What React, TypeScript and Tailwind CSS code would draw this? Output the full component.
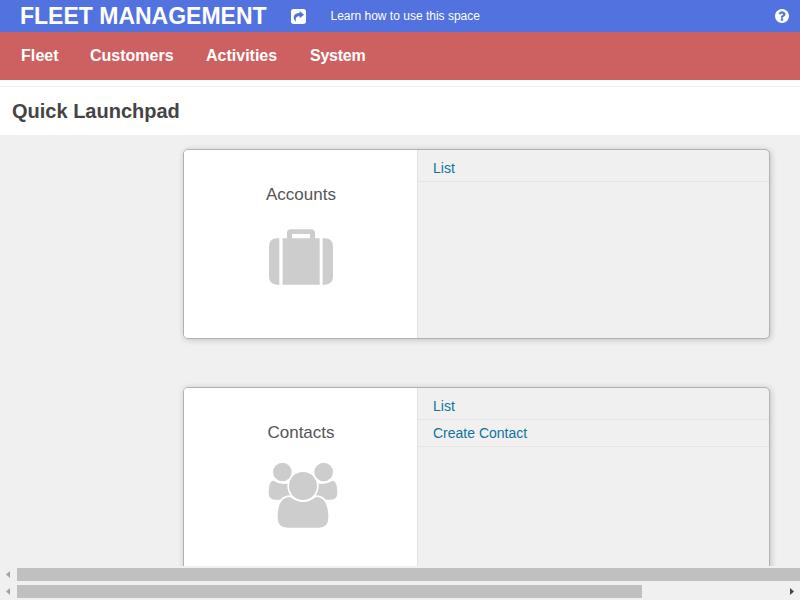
import React from 'react';

const nav = [
  { label: 'Fleet', style: 'w-[69px] tracking-[0.08px]' },
  { label: 'Customers', style: 'w-[116px]' },
  { label: 'Activities', style: 'w-[104px]' },
  { label: 'System', style: 'w-[80px] tracking-[-0.25px]' },
];

function ShareIcon() {
  return (
    <svg className="block h-[15px] w-[15px]" viewBox="0 0 45 45">
      <rect width="45" height="45" rx="8" fill="#fff" />
      <path d="M26 6 L39 17 L26 28 V22 C16 22 13 27 15 38 C5 31 4 12 26 12 Z" fill="#5272df" />
    </svg>
  );
}

function HelpIcon() {
  return (
    <svg className="block h-[14px] w-[14px]" viewBox="0 0 1536 1536">
      <path
        fill="#fff"
        d="M896 1248v-192q0-14-9-23t-23-9H672q-14 0-23 9t-9 23v192q0 14 9 23t23 9h192q14 0 23-9t9-23zm256-672q0-88-55.500-163T958 297t-170-41q-243 0-371 213-15 24 8 42l132 100q7 6 19 6 16 0 25-12 53-68 86-92 34-24 86-24 48 0 85.500 26t37.500 59q0 38-20 61t-68 45q-63 28-115.500 86.500T640 892v36q0 14 9 23t23 9h192q14 0 23-9t9-23q0-19 21.500-49.500T972 829q32-18 49-28.500t46-35 44.500-48 28-60.500 12.500-81zm384 192q0 209-103 385.500T1153.500 1433 768 1536t-385.500-103T103 1153.500 0 768t103-385.500T382.500 103 768 0t385.500 103T1433 382.500 1536 768z"
      />
    </svg>
  );
}

function SuitcaseIcon() {
  return (
    <svg className="h-[56px] w-[64px]" viewBox="0 0 192 168">
      <g fill="#cdcdcd">
        <path d="M31 28 V167 H24 Q0 167 0 142 V54 Q0 28 24 28 Z" />
        <path d="M161 28 V167 H168 Q192 167 192 142 V54 Q192 28 168 28 Z" />
        <path
          fillRule="evenodd"
          d="M41 28 H54 V12 Q54 1 66 1 H126 Q138 1 138 12 V28 H152 V167 H41 Z M69 15 V28 H123 V15 Z"
        />
      </g>
    </svg>
  );
}

function GroupIcon() {
  return (
    <svg className="h-[66px] w-[70px]" viewBox="0 0 210 198">
      <g fill="#cdcdcd">
        <path d="M17 56 Q42 73 66 62 L80 86 L57 113 H22 Q2 113 2 93 Q2 55 17 56 Z" />
        <path d="M193 56 Q168 73 144 62 L130 86 L153 113 H188 Q208 113 208 93 Q208 55 193 56 Z" />
        <g stroke="#fff" strokeWidth="10" paintOrder="stroke">
          <circle cx="43" cy="30" r="28" />
          <circle cx="167" cy="30" r="28" />
          <path d="M66 105 Q105 135 144 105 C172 105 181 132 181 168 Q181 197 152 197 H58 Q29 197 29 168 C29 132 38 105 66 105 Z" />
          <circle cx="105" cy="72" r="42" />
        </g>
      </g>
    </svg>
  );
}

function Card({ title, icon, links, iconMargin }: { title: string; icon: React.ReactNode; links: string[]; iconMargin: string }) {
  return (
    <section className="ml-[183px] flex h-[190px] w-[587px] shrink-0 overflow-hidden rounded-[5px] border border-[#b2b2b2] bg-[#f0f0f0] shadow-[1px_1px_6px_rgba(0,0,0,0.2)]">
      <div className="flex w-[234px] shrink-0 flex-col items-center border-r border-[#e2e2e2] bg-white pt-[35px]">
        <h2 className="ml-px text-[17px] leading-5 text-[#555]">{title}</h2>
        <div className={iconMargin}>{icon}</div>
      </div>
      <ul className="flex-1 pt-[5px]">
        {links.map((link) => (
          <li key={link} className="h-[27px] border-b border-[#e4e4e4] pl-[15px] text-[14px] leading-[26px] text-[#0f739d]">
            {link}
          </li>
        ))}
      </ul>
    </section>
  );
}

function LeftArrow() {
  return (
    <svg className="h-[7px] w-[4px]" viewBox="0 0 4 7">
      <path d="M4 0 V7 L0 3.500 Z" fill="#a3a3a3" />
    </svg>
  );
}

export default function App() {
  return (
    <div className="flex h-[600px] w-[800px] flex-col overflow-hidden bg-[#f0f0f0] font-['Liberation_Sans',Arial,sans-serif]">
      <header className="flex h-8 shrink-0 items-center bg-[#5272df] pr-[11px] pl-5 text-white">
        <h1 className="w-[271px] text-[23px] leading-8 font-bold whitespace-nowrap">FLEET MANAGEMENT</h1>
        <ShareIcon />
        <a className="ml-[24.5px] flex-1 text-[12px] leading-8">Learn how to use this space</a>
        <HelpIcon />
      </header>
      <nav className="flex h-12 shrink-0 bg-[#cd6161] pl-[21px] text-[16px] leading-[47px] font-bold text-white">
        {nav.map((item) => (
          <a key={item.label} className={item.style}>{item.label}</a>
        ))}
      </nav>
      <div className="h-[7px] shrink-0 border-b border-[#eee] bg-white" />
      <div className="h-12 shrink-0 bg-white pl-3 text-[20px] leading-[48px] font-bold text-[#444]">Quick Launchpad</div>
      <main className="flex h-[431px] shrink-0 flex-col gap-12 overflow-hidden pt-[14px]">
        <Card title="Accounts" icon={<SuitcaseIcon />} links={['List']} iconMargin="mt-[24px]" />
        <Card title="Contacts" icon={<GroupIcon />} links={['List', 'Create Contact']} iconMargin="mt-[19px] ml-[5px]" />
      </main>
      <div className="mt-[2px] flex h-[13px] shrink-0 items-center pl-[6px]">
        <LeftArrow />
        <div className="ml-[7px] h-[13px] flex-1 bg-[#c0c0c0]" />
      </div>
      <div className="mt-1 flex h-[13px] shrink-0 items-center pl-[6px]">
        <LeftArrow />
        <div className="ml-[7px] h-[13px] w-[625px] bg-[#c0c0c0]" />
        <svg className="ml-[148px] h-[7px] w-[4px]" viewBox="0 0 4 7">
          <path d="M0 0 V7 L4 3.500 Z" fill="#444" />
        </svg>
      </div>
    </div>
  );
}
